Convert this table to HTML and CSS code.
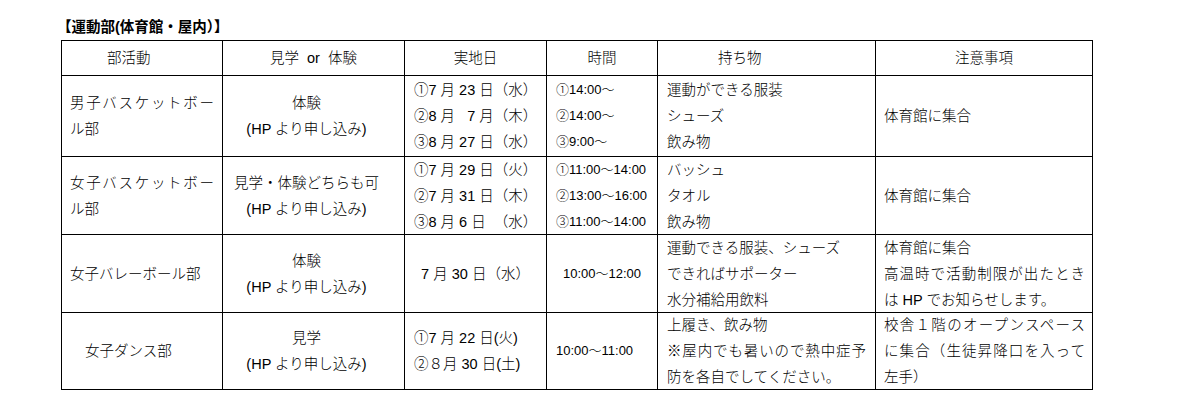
FILE: index.html
```html
<!DOCTYPE html>
<html lang="ja">
<head>
<meta charset="utf-8">
<title>運動部(体育館・屋内)</title>
<link rel="stylesheet" href="styles.css">
</head>
<body>
<div class="title">【運動部(体育館・屋内）】</div>
<div class="sheet">
  <div class="cell head hd-club">部活動</div>
  <div class="cell head ctr">見学&nbsp; or &nbsp;体験</div>
  <div class="cell head ctr">実地日</div>
  <div class="cell head ctr">時間</div>
  <div class="cell head hd-items">持ち物</div>
  <div class="cell head ctr">注意事項</div>

  <div class="cell club"><div class="jl">男子バスケットボー</div><div>ル部</div></div>
  <div class="cell mode"><div>体験</div><div>(HP より申し込み)</div></div>
  <div class="cell date"><div>①7 月 23 日（水）</div><div>②8 月 &nbsp;&nbsp;7 月（木）</div><div>③8 月 27 日（水）</div></div>
  <div class="cell time"><div>①14:00～</div><div>②14:00～</div><div>③9:00～</div></div>
  <div class="cell items"><div>運動ができる服装</div><div>シューズ</div><div>飲み物</div></div>
  <div class="cell note"><div>体育館に集合</div></div>

  <div class="cell club"><div class="jl">女子バスケットボー</div><div>ル部</div></div>
  <div class="cell mode"><div>見学・体験どちらも可</div><div>(HP より申し込み)</div></div>
  <div class="cell date"><div>①7 月 29 日（火）</div><div>②7 月 31 日（木）</div><div>③8 月 6 日&nbsp;&nbsp;（水）</div></div>
  <div class="cell time"><div>①11:00～14:00</div><div>②13:00～16:00</div><div>③11:00～14:00</div></div>
  <div class="cell items"><div>バッシュ</div><div>タオル</div><div>飲み物</div></div>
  <div class="cell note"><div>体育館に集合</div></div>

  <div class="cell club"><div>女子バレーボール部</div></div>
  <div class="cell mode"><div>体験</div><div>(HP より申し込み)</div></div>
  <div class="cell date ctr"><div>7 月 30 日（水）</div></div>
  <div class="cell time ctr"><div>10:00～12:00</div></div>
  <div class="cell items"><div>運動できる服装、シューズ</div><div>できればサポーター</div><div>水分補給用飲料</div></div>
  <div class="cell note"><div>体育館に集合</div><div class="jl">高温時で活動制限が出たとき</div><div>は HP でお知らせします。</div></div>

  <div class="cell club indent"><div>女子ダンス部</div></div>
  <div class="cell mode"><div>見学</div><div>(HP より申し込み)</div></div>
  <div class="cell date"><div>①7 月 22 日(火)</div><div>②８月 30 日(土)</div></div>
  <div class="cell time"><div>10:00～11:00</div></div>
  <div class="cell items"><div>上履き、飲み物</div><div class="jl">※屋内でも暑いので熱中症予</div><div>防を各自でしてください。</div></div>
  <div class="cell note"><div class="jl">校舎１階のオープンスペース</div><div class="jl">に集合（生徒昇降口を入って</div><div>左手）</div></div>
</div>
</body>
</html>
```

FILE: styles.css
```css
html, body {
  margin: 0;
  background: #fff;
}
body {
  font-family: "Liberation Sans", "Noto Sans CJK JP", sans-serif;
  font-size: 14.5px;
  font-weight: 300;
  color: #000;
}
.title {
  box-sizing: border-box;
  height: 40px;
  padding: 17px 0 0 57px;
  line-height: 20px;
  font-weight: bold;
  color: #000;
}
.sheet {
  display: grid;
  width: max-content;
  margin-left: 61px;
  grid-template-columns: 161px 182px 142px 111px 218px 217px;
  grid-template-rows: 35px 81px 78px 78px 77px;
  border-left: 1px solid #000;
  border-top: 1px solid #000;
}
.cell {
  box-sizing: border-box;
  display: flex;
  flex-direction: column;
  justify-content: center;
  padding: 0 8px;
  line-height: 26px;
  border-right: 1px solid #000;
  border-bottom: 1px solid #000;
  white-space: nowrap;
}
.ctr { text-align: center; }
.head { padding-bottom: 1px; }
.hd-club { padding-left: 45px; }
.hd-items { padding-left: 60px; }
.jl {
  text-align: justify;
  text-align-last: justify;
  text-justify: inter-character;
}
.club { padding: 0 8px; }
.club.indent { padding-left: 23px; }
.mode { text-align: center; padding: 0 22px 0 8px; }
.date { padding: 0 9px; }
.time { padding: 0 9px; font-size: 13px; }
.items { padding: 0 9px 0 9px; }
.note { padding: 0 7px 0 8px; }
```
